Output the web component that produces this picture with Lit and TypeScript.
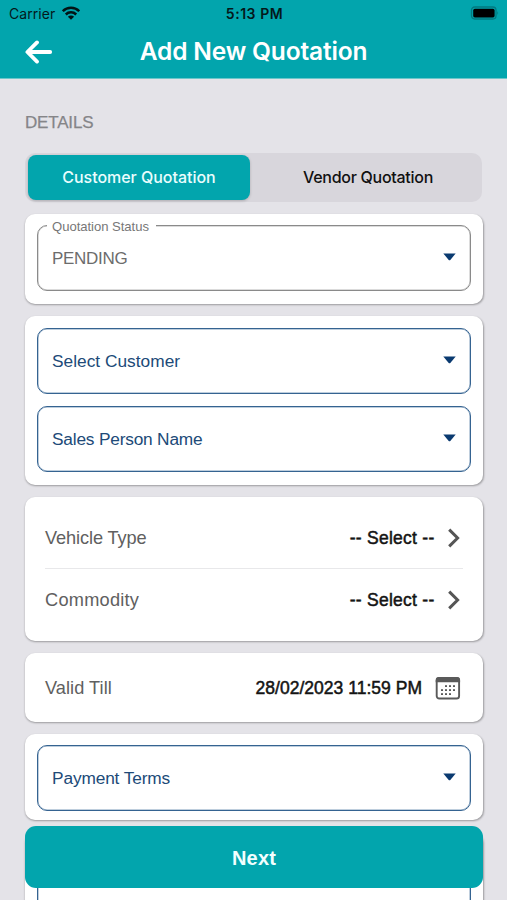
import { LitElement, html, svg, css } from "lit";
import { customElement, property } from "lit/decorators.js";

@customElement("select-field")
class SelectField extends LitElement {
  @property() label = "";
  @property() caption = "";

  static styles = css`
    :host {
      display: block;
      letter-spacing: -0.13px;
    }
    .box {
      position: relative;
      box-sizing: border-box;
      height: 66px;
      border: 1px solid #356391;
      box-shadow: inset 0 0 0 0.5px #7f9dbb;
      border-radius: 10px;
      padding: 1px 14px 0;
      display: flex;
      align-items: center;
      justify-content: space-between;
      color: #204a78;
      font-size: 17.3px;
    }
    .outlined {
      border-color: #8a8a8a;
      box-shadow: inset 0 0 0 0.5px #b8b8b8;
      color: #6c6c6c;
      font-size: 17px;
      letter-spacing: -0.3px;
    }
    .caption {
      position: absolute;
      left: 9px;
      top: -8px;
      padding: 0 7px 0 5px;
      background: #fff;
      color: #777;
      font-size: 13.1px;
      line-height: 18px;
      letter-spacing: -0.04px;
    }
    .arrow {
      width: 13px;
      height: 8px;
      margin-top: -4px;
      fill: #0a3a70;
    }
  `;

  render() {
    return html`<div class="box ${this.caption ? "outlined" : ""}">
      ${this.caption ? html`<span class="caption">${this.caption}</span>` : ""}
      <span>${this.label}</span>
      <svg class="arrow" viewBox="0 0 13 8"><path d="M.3.4h12.4L7.3 6.9q-.8.8-1.6 0z" /></svg>
    </div>`;
  }
}

const chevron = html`<svg class="chevron" viewBox="0 0 14 20">
  <path d="M2.2 1.6 10.6 10l-8.4 8.4" />
</svg>`;

const calendarDots = [
  [11, 10], [15, 10], [19, 10],
  [7, 14], [11, 14], [15, 14], [19, 14],
  [7, 18], [11, 18], [15, 18],
];

const calendar = html`<svg class="calendar" viewBox="0 0 26 24">
  <rect class="frame" x="1.7" y="1.9" width="22.4" height="20.6" rx="2.6" />
  <path d="M.7 6.2V4a3 3 0 0 1 3-3h18.4a3 3 0 0 1 3 3v2.2z" />
  ${calendarDots.map(([x, y]) => svg`<rect x=${x - 1} y=${y - 0.8} width="2" height="1.8" />`)}
</svg>`;

@customElement("app-root")
class AppRoot extends LitElement {
  static styles = css`
    :host {
      display: block;
      position: relative;
      height: 900px;
      overflow: hidden;
      background: #e4e3e8;
      font-family: "Liberation Sans", Arial, sans-serif;
    }
    .header {
      height: 79px;
      background: #02a5ad;
      border-bottom: 1px solid #6cc6ca;
      box-sizing: border-box;
      font-family: Inter, sans-serif;
    }
    .status {
      display: grid;
      grid-template-columns: 1fr auto 1fr;
      align-items: center;
      height: 27px;
      padding: 0 7px 0 9px;
      color: #04191b;
      font-size: 14px;
      letter-spacing: 0.06px;
    }
    .carrier {
      display: flex;
      align-items: center;
      gap: 7px;
    }
    .time {
      font-weight: 600;
      letter-spacing: 0.55px;
    }
    .wifi {
      width: 18px;
      height: 14px;
      margin-top: -2px;
    }
    .battery {
      width: 30px;
      height: 14px;
      justify-self: end;
      margin-top: -1px;
    }
    .nav {
      display: grid;
      grid-template-columns: 60px 1fr 60px;
      align-items: center;
      height: 48px;
      color: #fff;
    }
    .back {
      width: 28px;
      height: 24px;
      margin: 2px 0 0 25px;
      fill: none;
      stroke: #fff;
      stroke-width: 3.8;
      stroke-linecap: round;
      stroke-linejoin: round;
    }
    .title {
      text-align: center;
      font-size: 24.5px;
      font-weight: 600;
      letter-spacing: -0.17px;
      white-space: nowrap;
    }
    .content {
      display: flex;
      flex-direction: column;
      padding: 0 24px 0 25px;
    }
    .section {
      margin: 33px 0 20px 0;
      color: #858588;
      font-size: 17px;
      line-height: 21px;
      letter-spacing: -0.18px;
      -webkit-text-stroke: 0.25px #858588;
    }
    .segments {
      display: grid;
      grid-template-columns: 222px 1fr;
      box-sizing: border-box;
      height: 49px;
      margin-right: 1px;
      padding: 2px 2px 2px 3px;
      border-radius: 10px;
      background: #d8d6dc;
      font: 500 16px/45px Inter, sans-serif;
      text-align: center;
      color: #111;
    }
    .segment {
      padding-left: 6px;
      letter-spacing: -0.28px;
    }
    .active {
      padding-left: 0;
      border-radius: 8px;
      background: #02a5ad;
      color: #e9fdfd;
      box-shadow: 0 1px 3px rgba(0, 0, 0, 0.2);
      letter-spacing: -0.03px;
    }
    .card {
      box-sizing: border-box;
      margin-bottom: 12px;
      padding: 12px;
      border-radius: 10px;
      background: #fff;
      box-shadow: 0.5px 1px 2px rgba(0, 0, 0, 0.32);
    }
    .status-card {
      margin-top: 12px;
      padding-top: 11px;
      height: 90px;
    }
    .pair {
      display: flex;
      flex-direction: column;
      gap: 12px;
      height: 169px;
    }
    .customer {
      letter-spacing: 0.02px;
    }
    .sales {
      letter-spacing: -0.19px;
    }
    .rows {
      height: 144px;
      padding: 9px 20px 0;
    }
    .valid {
      height: 69px;
      padding: 0 20px;
    }
    .row {
      display: flex;
      align-items: center;
      box-sizing: border-box;
      height: 62px;
      padding-top: 2px;
      color: #606060;
      font-size: 18.2px;
      letter-spacing: -0.1px;
    }
    .row + .row {
      height: 63px;
      padding-top: 1px;
      border-top: 1px solid #e8e8ea;
      letter-spacing: 0.25px;
    }
    .valid .row {
      height: 69px;
      letter-spacing: 0.05px;
    }
    .value {
      margin-left: auto;
      color: #141414;
      font-size: 17.5px;
      letter-spacing: 0.02px;
      -webkit-text-stroke: 0.5px #141414;
    }
    .choice {
      letter-spacing: 0.26px;
    }
    .chevron {
      width: 14px;
      height: 20px;
      margin: -1px 2px 0 12.5px;
      fill: none;
      stroke: #555;
      stroke-width: 3;
    }
    .calendar {
      width: 26px;
      height: 24px;
      margin: -1px 2px 0 13px;
      fill: #5a5a5a;
    }
    .frame {
      fill: #fff;
      stroke: #5a5a5a;
      stroke-width: 1.9;
    }
    .terms {
      height: 86px;
      padding-top: 11px;
    }
    .next {
      position: absolute;
      left: 25px;
      right: 24px;
      top: 826px;
      height: 62px;
      border-radius: 11px;
      background: #02a5ad;
      color: #f2ffff;
      font-size: 20px;
      font-weight: 700;
      line-height: 64px;
      letter-spacing: 0.17px;
      text-align: center;
    }
  `;

  render() {
    return html`
      <div class="header">
        <div class="status">
          <div class="carrier">
            <span>Carrier</span>
            <svg class="wifi" viewBox="0 0 18 14">
              <g fill="none" stroke="#021415" stroke-width="2.5">
                <path d="M.8 5.2a11.6 11.6 0 0 1 16.4 0" />
                <path d="M3.8 8.5a7.4 7.4 0 0 1 10.4 0" />
              </g>
              <path fill="#021415" d="M9 13.8 5.9 10.7a4.4 4.4 0 0 1 6.2 0z" />
            </svg>
          </div>
          <span class="time">5:13 PM</span>
          <svg class="battery" viewBox="0 0 30 14">
            <rect x="1.5" y="1" width="24.5" height="12" rx="3.2" fill="none" stroke="#027a80" stroke-width="1.3" />
            <rect x="3.2" y="2.8" width="21.4" height="8.6" rx="1.6" fill="#000" />
            <path d="M27.3 5q1.8 2 0 4z" fill="#027a80" />
          </svg>
        </div>
        <div class="nav">
          <svg class="back" viewBox="0 0 28 24">
            <path d="M25.2 12H3M12 2.4 2.4 12l9.6 9.6" />
          </svg>
          <div class="title">Add New Quotation</div>
        </div>
      </div>
      <div class="content">
        <div class="section">DETAILS</div>
        <div class="segments">
          <div class="segment active">Customer Quotation</div>
          <div class="segment">Vendor Quotation</div>
        </div>
        <div class="card status-card">
          <select-field caption="Quotation Status" label="PENDING"></select-field>
        </div>
        <div class="card pair">
          <select-field class="customer" label="Select Customer"></select-field>
          <select-field class="sales" label="Sales Person Name"></select-field>
        </div>
        <div class="card rows">
          <div class="row">Vehicle Type<span class="value choice">-- Select --</span>${chevron}</div>
          <div class="row">Commodity<span class="value choice">-- Select --</span>${chevron}</div>
        </div>
        <div class="card valid">
          <div class="row">Valid Till<span class="value">28/02/2023 11:59 PM</span>${calendar}</div>
        </div>
        <div class="card terms">
          <select-field label="Payment Terms"></select-field>
        </div>
        <div class="card">
          <select-field></select-field>
        </div>
      </div>
      <div class="next">Next</div>
    `;
  }
}
